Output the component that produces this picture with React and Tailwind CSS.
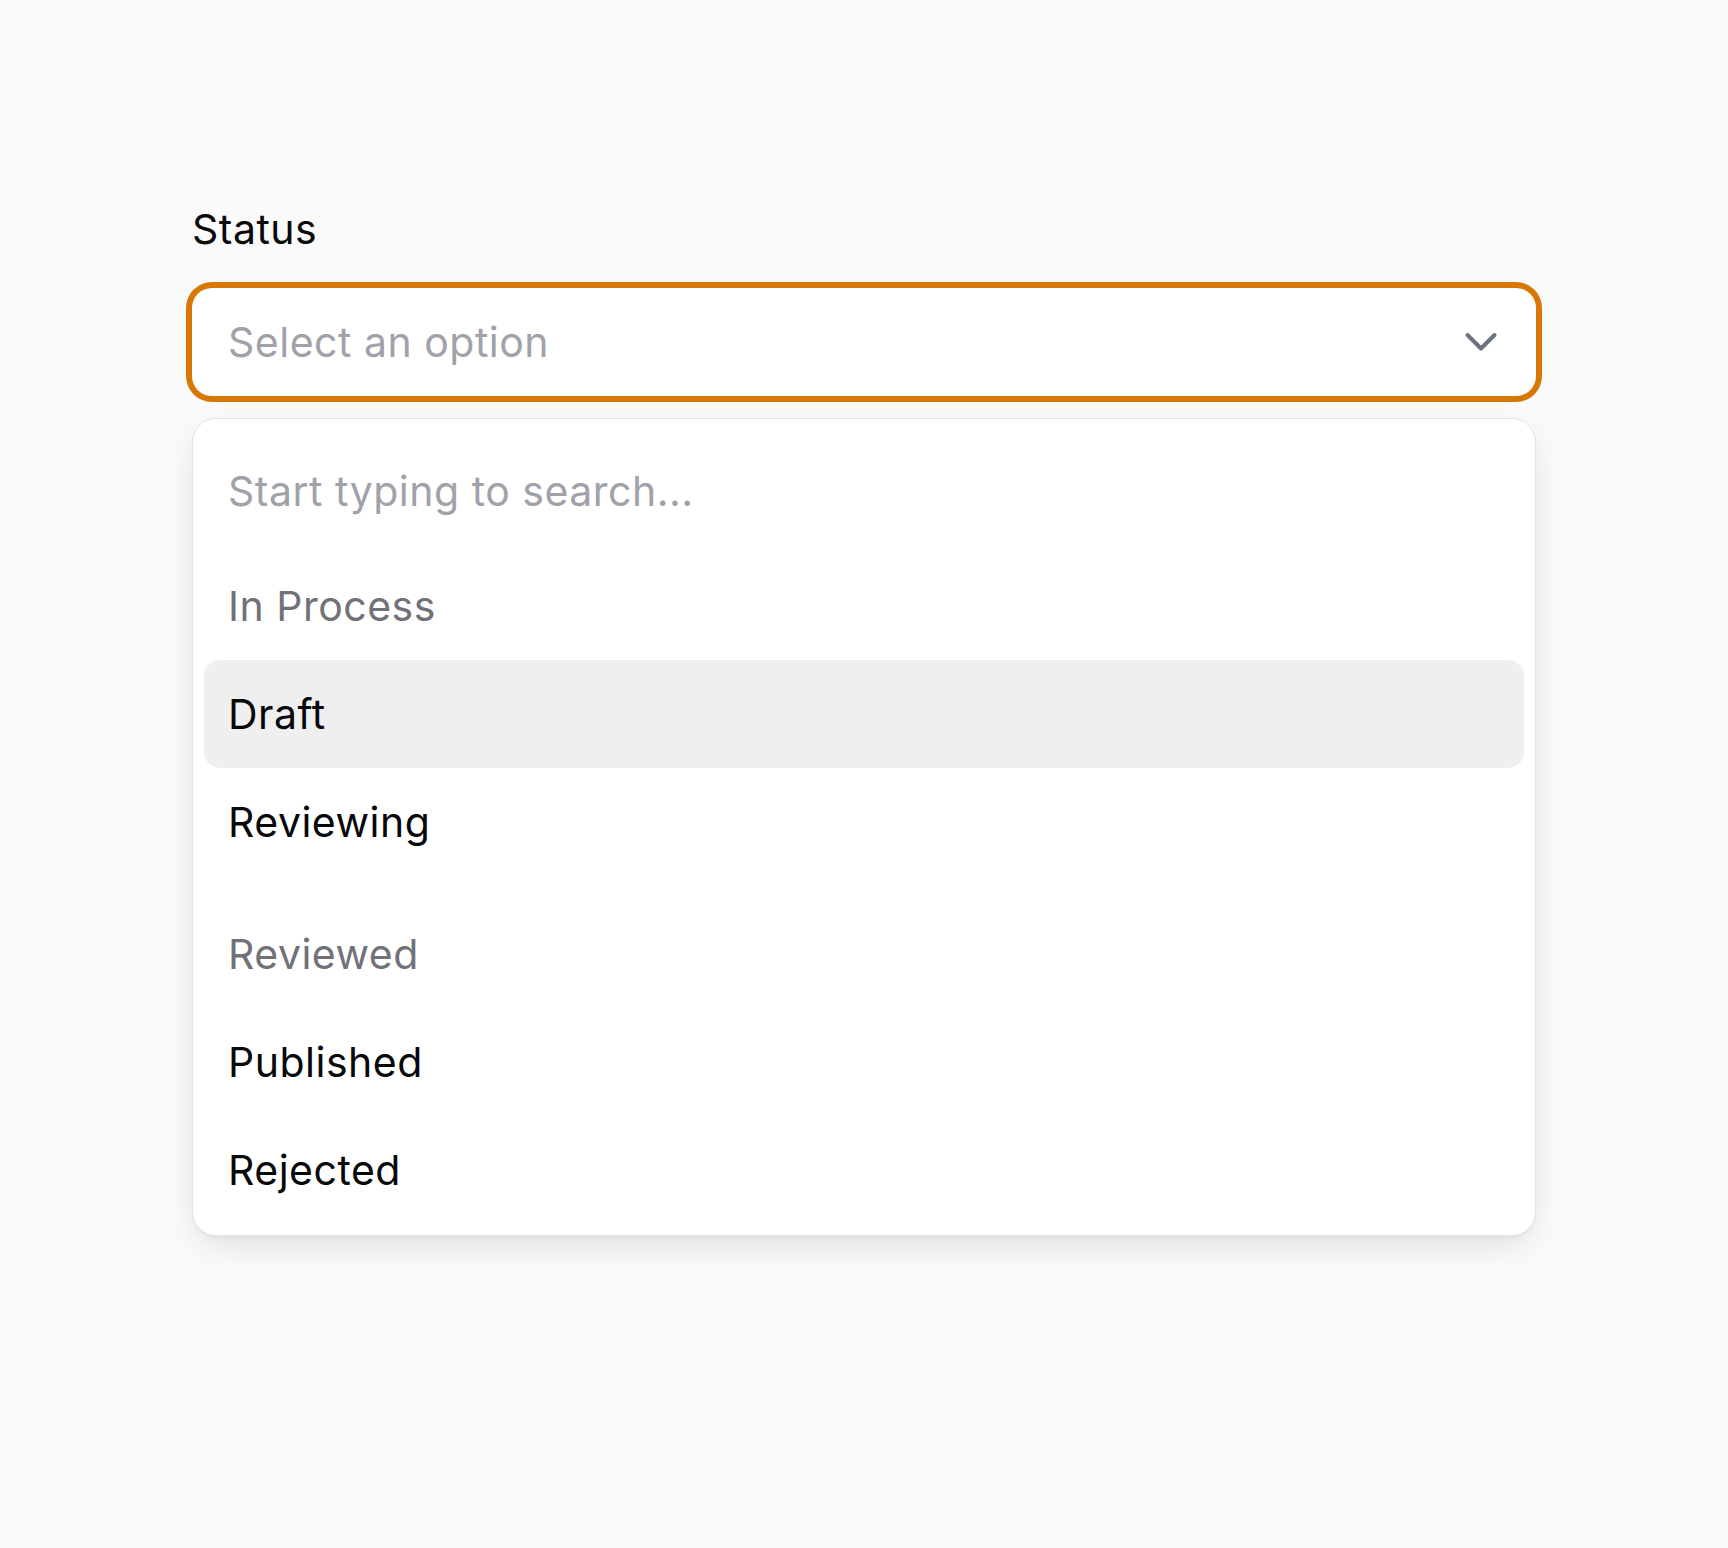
import React from "react";

function Chevron() {
  return (
    <svg width="34" height="22" viewBox="0 0 34 22" fill="none" className="shrink-0">
      <path d="M3.5 4 L17 17.5 L30.5 4" stroke="#6b7280" strokeWidth="4" strokeLinecap="round" strokeLinejoin="round" />
    </svg>
  );
}

function Header({ children }) {
  return (
    <div className="h-[108px] flex items-center px-6 text-[41px] leading-[60px] tracking-[0.5px] text-[#71717a]">{children}</div>
  );
}

function Item({ children, active }) {
  return (
    <div
      className={
        active
          ? "h-[108px] flex items-center px-6 rounded-[16px] bg-[#efefef] text-[41px] leading-[60px] tracking-[0.5px] text-[#09090b]"
          : "h-[108px] flex items-center px-6 rounded-[16px] text-[41px] leading-[60px] tracking-[0.5px] text-[#09090b]"
      }
    >
      {children}
    </div>
  );
}

export default function App() {
  return (
    <div
      className="min-h-[1548px] w-full bg-[#fafafa] px-[192px] pt-[199px]"
      style={{ fontFamily: "Inter, 'Noto Sans', sans-serif" }}
    >
      <div className="text-[41px] leading-[60px] tracking-[0.5px] text-[#0a0a0a]">Status</div>
      <div className="mt-[29px] h-[108px] rounded-[20px] bg-white ring-[6px] ring-[#d97706] flex items-center justify-between pl-9 pr-[38px]">
        <span className="text-[41px] leading-[60px] tracking-[0.5px] text-[#a1a1aa]">Select an option</span>
        <Chevron />
      </div>
      <div className="mt-[22px] rounded-[24px] border border-[#e4e4e7] bg-white p-[11px] shadow-[0_12px_36px_-6px_rgba(0,0,0,0.12),0_4px_10px_-4px_rgba(0,0,0,0.06)]">
        <div className="h-[122px] flex items-center px-6 text-[41px] leading-[60px] tracking-[0.5px] text-[#a1a1aa]">
          Start typing to search...
        </div>
        <Header>In Process</Header>
        <Item active>Draft</Item>
        <Item>Reviewing</Item>
        <div className="h-[24px]" />
        <Header>Reviewed</Header>
        <Item>Published</Item>
        <Item>Rejected</Item>
      </div>
    </div>
  );
}
